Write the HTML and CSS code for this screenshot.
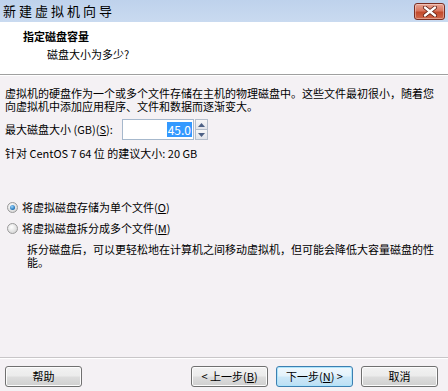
FILE: index.html
```html
<!DOCTYPE html>
<html lang="zh-CN">
<head>
<meta charset="utf-8">
<title>新建虚拟机向导</title>
<link rel="stylesheet" href="styles.css">
</head>
<body>
<div class="window">
  <div class="titlebar">
    <span class="title">新建虚拟机向导</span>
    <span class="close">
      <svg width="16" height="11" viewBox="0 0 16 11">
        <path d="M3 1.5 L13 9.5 M13 1.5 L3 9.5" stroke="#5a1a10" stroke-width="4" stroke-linecap="round"/>
        <path d="M3 1.5 L13 9.5 M13 1.5 L3 9.5" stroke="#ffffff" stroke-width="2.4" stroke-linecap="round"/>
      </svg>
    </span>
  </div>
  <div class="header">
    <div class="h-title">指定磁盘容量</div>
    <div class="h-sub">磁盘大小为多少?</div>
  </div>
  <div class="content">
    <p class="para">虚拟机的硬盘作为一个或多个文件存储在主机的物理磁盘中。这些文件最初很小，随着您向虚拟机中添加应用程序、文件和数据而逐渐变大。</p>
    <div class="size-row">
      <span class="label">最大磁盘大小 (GB)(<u>S</u>):</span>
      <div class="spin">
        <div class="spin-input"><span class="sel">45.0</span></div>
        <div class="spin-btns">
          <span class="spin-btn"><svg width="7" height="4" viewBox="0 0 7 4"><path d="M0 4 L3.5 0 L7 4 Z" fill="#4d6185"/></svg></span>
          <span class="spin-btn"><svg width="7" height="4" viewBox="0 0 7 4"><path d="M0 0 L3.5 4 L7 0 Z" fill="#4d6185"/></svg></span>
        </div>
      </div>
    </div>
    <p class="recommend">针对 CentOS 7 64 位 的建议大小: 20 GB</p>
    <div class="options">
      <div class="radio-row"><span class="radio on"></span><span>将虚拟磁盘存储为单个文件(<u>O</u>)</span></div>
      <div class="radio-row"><span class="radio"></span><span>将虚拟磁盘拆分成多个文件(<u>M</u>)</span></div>
      <p class="desc">拆分磁盘后，可以更轻松地在计算机之间移动虚拟机，但可能会降低大容量磁盘的性能。</p>
    </div>
  </div>
  <div class="footer">
    <button class="btn">帮助</button>
    <div class="nav">
      <button class="btn">&lt; 上一步(<u>B</u>)</button>
      <button class="btn default">下一步(<u>N</u>) &gt;</button>
      <button class="btn">取消</button>
    </div>
  </div>
</div>
</body>
</html>
```
FILE: styles.css
```css
* { box-sizing: border-box; }
html, body {
  margin: 0;
  padding: 0;
}
body {
  width: 448px;
  height: 391px;
  overflow: hidden;
  font-family: "Noto Sans CJK SC", "Microsoft YaHei", sans-serif;
  font-size: 11px;
  line-height: 13px;
  color: #000;
  background: #f4f1f4;
}
.window {
  display: flex;
  flex-direction: column;
  height: 391px;
}
.titlebar {
  height: 22px;
  display: flex;
  align-items: center;
  justify-content: space-between;
  padding: 0 3px 0 3px;
  background: linear-gradient(#bed2ec, #c9daf0);
}
.title {
  font-size: 13px;
  letter-spacing: 3px;
  color: #000;
  line-height: 16px;
}
.close {
  width: 31px;
  height: 17px;
  margin-top: 1px;
  border: 1px solid #7a2e22;
  border-radius: 3px;
  background: linear-gradient(#e8a595 0%, #d9775f 45%, #c24a2c 55%, #d0694d 100%);
  box-shadow: inset 0 0 0 1px rgba(255,255,255,0.35);
  display: flex;
  align-items: center;
  justify-content: center;
}
.header {
  height: 53px;
  background: #ffffff;
  border-bottom: 1px solid #a0a0a0;
  box-shadow: 0 1px 0 #ffffff;
  padding: 8px 0 0 23px;
}
.h-title {
  font-weight: bold;
}
.h-sub {
  margin-top: 5px;
  padding-left: 24px;
}
.content {
  flex: 1;
  padding: 12px 5px 0 5px;
}
.para {
  margin: 0;
}
.size-row {
  display: flex;
  align-items: center;
  margin-top: 6px;
  height: 21px;
}
.label {
  width: 117px;
}
.spin {
  display: flex;
  height: 21px;
}
.spin-input {
  width: 72px;
  height: 21px;
  border: 1px solid #a6b8cc;
  background: #fff;
  display: flex;
  align-items: center;
  justify-content: flex-end;
  padding-right: 1px;
  font-size: 12px;
}
.sel {
  background: #3399ff;
  color: #fff;
  line-height: 15px;
  padding: 0 1px;
}
.spin-btns {
  display: flex;
  flex-direction: column;
  width: 13px;
  margin-left: 1px;
}
.spin-btn {
  flex: 1;
  border: 1px solid #b5bfcc;
  background: linear-gradient(#f7f7f7, #e1e4ea);
  display: flex;
  align-items: center;
  justify-content: center;
}
.spin-btn + .spin-btn { border-top: none; }
.recommend {
  margin: 7px 0 0 0;
}
.options {
  margin-top: 41px;
  padding-left: 2px;
}
.radio-row {
  display: flex;
  align-items: center;
  height: 13px;
  gap: 4px;
  margin-bottom: 8px;
}
.radio {
  width: 11px;
  height: 11px;
  border-radius: 50%;
  border: 1px solid #9a9a9a;
  background: radial-gradient(circle at 40% 35%, #ffffff, #d6d6d6 80%);
  position: relative;
}
.radio.on::after {
  content: "";
  position: absolute;
  left: 2px;
  top: 2px;
  width: 5px;
  height: 5px;
  border-radius: 50%;
  background: radial-gradient(circle at 40% 35%, #9ad6ff, #1c6eb4 70%, #0d4a85);
}
.desc {
  margin: 1px 8px 0 20px;
}
.footer {
  height: 34px;
  border-top: 1px solid #c8c6c8;
  box-shadow: inset 0 1px 0 #ffffff;
  display: flex;
  align-items: flex-start;
  justify-content: space-between;
  padding: 8px 10px 0 5px;
}
.nav {
  display: flex;
  gap: 8px;
}
.btn {
  width: 77px;
  height: 21px;
  padding: 0;
  font-family: inherit;
  font-size: 11px;
  line-height: 13px;
  color: #000;
  border: 1px solid #707070;
  border-radius: 3px;
  background: linear-gradient(#f2f2f2 0%, #ebebeb 48%, #dddddd 52%, #cfcfcf 100%);
  box-shadow: inset 0 0 0 1px #fcfcfc;
}
.btn.default {
  border-color: #3c7fb1;
  box-shadow: inset 0 0 0 1px #aee4fb;
  background: linear-gradient(#f0f8fd 0%, #e2f2fb 48%, #cce8f8 52%, #bcdff4 100%);
}
```
